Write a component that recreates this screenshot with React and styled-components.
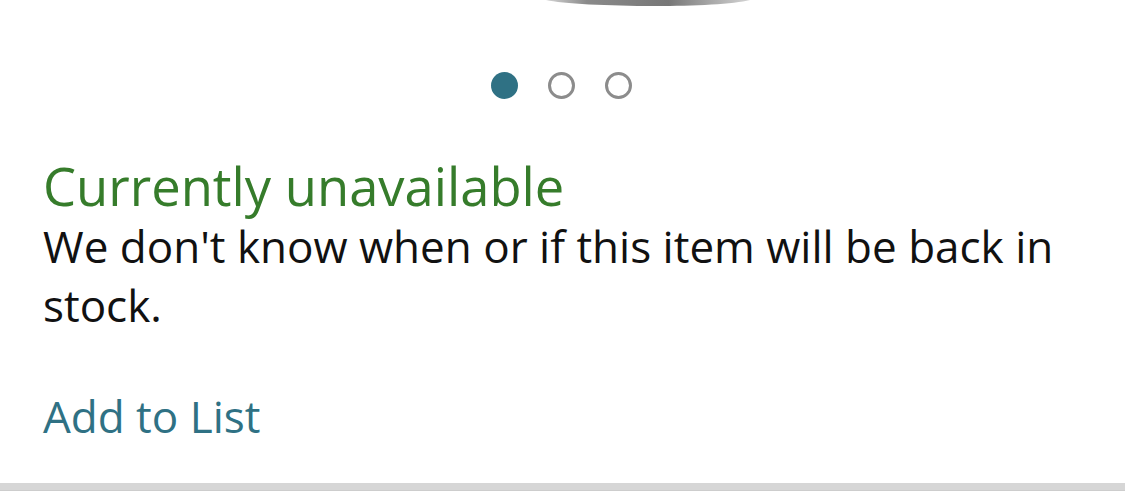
import React from 'react';
import styled, { createGlobalStyle } from 'styled-components';

const GlobalStyle = createGlobalStyle`
  html, body {
    margin: 0;
    padding: 0;
    background: #fff;
  }
  body {
    font-family: 'Open Sans', 'Noto Sans', sans-serif;
  }
`;

const slides = [0, 1, 2];

const App = () => {
  const active = 0;
  return (
    <Root>
      <GlobalStyle />
      <ImageEdge>
        <svg width="204" height="10" viewBox="0 0 204 10">
          <defs>
            <linearGradient id="edge" x1="0" x2="1" y1="0" y2="0">
              <stop offset="0" stopColor="#d4d4d4" />
              <stop offset="0.2" stopColor="#8a8a8a" />
              <stop offset="0.6" stopColor="#777" />
              <stop offset="1" stopColor="#d4d4d4" />
            </linearGradient>
          </defs>
          <path d="M0 0 C 30 7, 170 9, 204 0 Z" fill="url(#edge)" />
        </svg>
      </ImageEdge>
      <Dots>
        {slides.map((i) => (
          <Dot key={i} $active={i === active} />
        ))}
      </Dots>
      <Info>
        <Status>Currently unavailable</Status>
        <Message>We don't know when or if this item will be back in stock.</Message>
        <ListLink href="#">Add to List</ListLink>
      </Info>
      <Divider />
    </Root>
  );
};

export default App;

const Root = styled.div`
  width: 1125px;
  height: 491px;
  display: flex;
  flex-direction: column;
  overflow: hidden;
`;

const ImageEdge = styled.div`
  display: flex;
  justify-content: center;
  height: 10px;
  padding-left: 171px;
  svg {
    display: block;
  }
`;

const Dots = styled.div`
  display: flex;
  justify-content: center;
  gap: 30px;
  margin-top: 62px;
  padding-right: 2px;
`;

const Dot = styled.span`
  width: 27px;
  height: 27px;
  border-radius: 50%;
  box-sizing: border-box;
  background: ${(p) => (p.$active ? '#2f7184' : 'transparent')};
  border: ${(p) => (p.$active ? 'none' : '3px solid #8c8c8c')};
`;

const Info = styled.div`
  display: flex;
  flex-direction: column;
  align-items: flex-start;
  padding: 0 40px 0 43px;
  margin-top: 56px;
  flex: 1;
`;

const Status = styled.div`
  color: #367c2b;
  font-size: 52.5px;
  line-height: 62px;
`;

const Message = styled.div`
  color: #111;
  font-size: 44px;
  line-height: 59px;
`;

const ListLink = styled.a`
  color: #2f7184;
  font-size: 44px;
  line-height: 60px;
  margin-top: 51px;
  text-decoration: none;
`;

const Divider = styled.div`
  height: 8px;
  background: #d6d6d6;
  border-bottom: 1px solid #cdcdcd;
  box-sizing: border-box;
`;
